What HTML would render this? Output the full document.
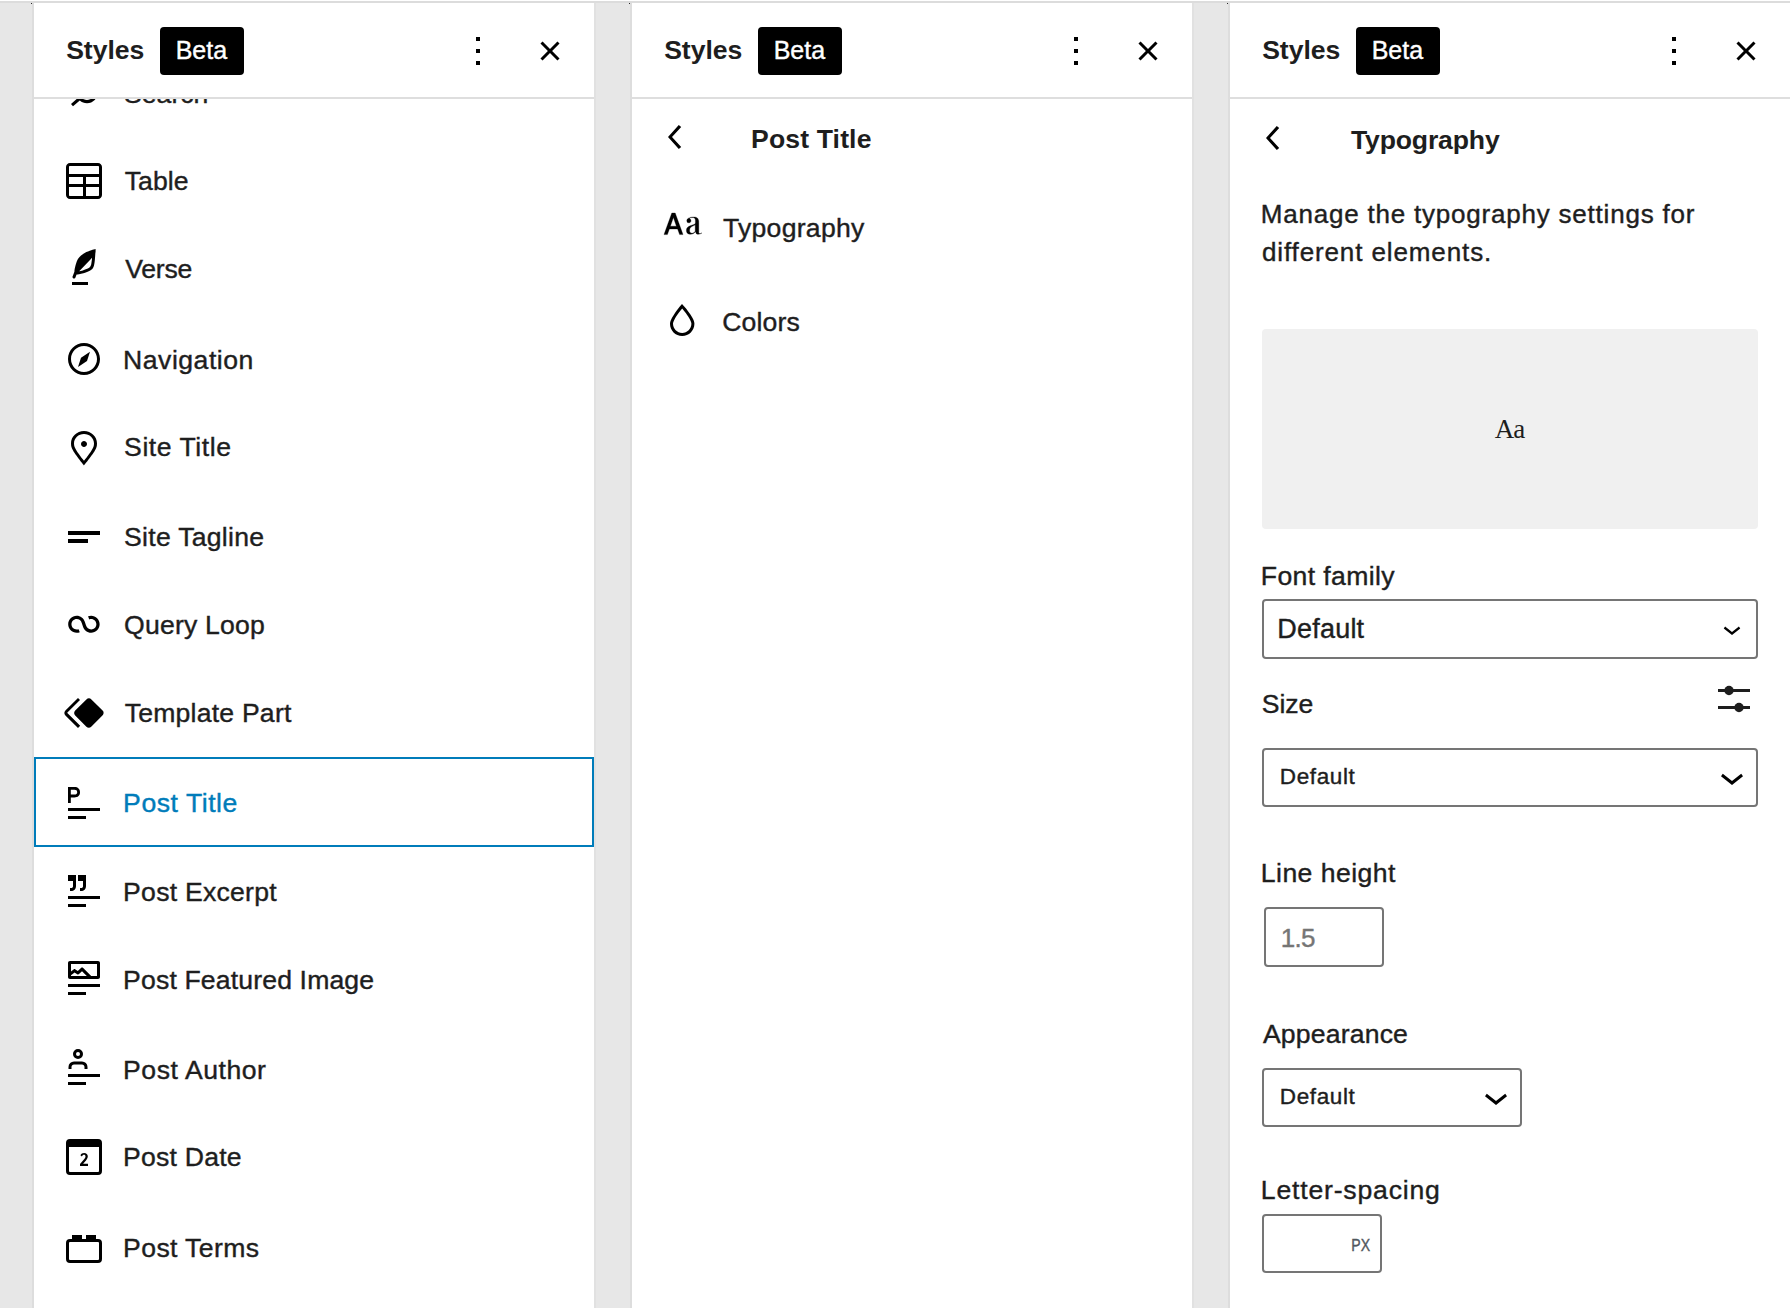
<!DOCTYPE html>
<html><head><meta charset="utf-8"><title>Styles</title>
<style>
html,body{margin:0;padding:0}
body{width:1790px;height:1308px;position:relative;overflow:hidden;background:#e7e7e7;font-family:'Liberation Sans',sans-serif}
.t{position:absolute;white-space:nowrap;-webkit-text-stroke:0.4px currentColor}
.i{position:absolute;display:block}
.b{position:absolute}
.top0{position:absolute;left:0;top:0;width:1790px;height:1px;background:#fff}
</style></head><body>
<div class="top0"></div>
<div class="b" style="left:0px;top:1px;width:1790px;height:2px;background:#dcdcdc"></div>
<div class="b" style="left:32px;top:3px;width:2px;height:1305px;background:#dddddd"></div>
<div class="b" style="left:34px;top:3px;width:560px;height:1305px;background:#fff"></div>
<div class="b" style="left:34px;top:97px;width:560px;height:2px;background:#dedede"></div>
<div class="b" style="left:594px;top:3px;width:2px;height:1305px;background:#e1e1e1"></div>
<div class="b" style="left:31px;top:3px;width:1px;height:1px;background:#2a2a2a"></div>
<div class="b" style="left:630px;top:3px;width:2px;height:1305px;background:#dddddd"></div>
<div class="b" style="left:632px;top:3px;width:560px;height:1305px;background:#fff"></div>
<div class="b" style="left:632px;top:97px;width:560px;height:2px;background:#dedede"></div>
<div class="b" style="left:1192px;top:3px;width:2px;height:1305px;background:#e1e1e1"></div>
<div class="b" style="left:629px;top:3px;width:1px;height:1px;background:#2a2a2a"></div>
<div class="b" style="left:1228px;top:3px;width:2px;height:1305px;background:#dddddd"></div>
<div class="b" style="left:1230px;top:3px;width:560px;height:1305px;background:#fff"></div>
<div class="b" style="left:1230px;top:97px;width:560px;height:2px;background:#dedede"></div>
<div class="b" style="left:1227px;top:3px;width:1px;height:1px;background:#2a2a2a"></div>
<div class="b" style="left:34px;top:757px;width:560px;height:89.5px;box-sizing:border-box;border:2px solid #007cba"></div>
<svg class="i" style="left:60px;top:69px" width="48" height="48" viewBox="0 0 24 24"><path fill="#000" fill-rule="evenodd" d="M13.5 6C10.5 6 8 8.5 8 11.5c0 1.1.3 2.1.9 3l-3.4 3 1 1.1 3.4-2.9c1 .9 2.2 1.4 3.6 1.4 3 0 5.5-2.5 5.5-5.5C19 8.5 16.5 6 13.5 6zm0 9.5c-2.2 0-4-1.8-4-4s1.8-4 4-4 4 1.8 4 4-1.8 4-4 4z"/></svg>
<div class="t" style="left:124.10px;top:80.69px;font-size:26.6px;line-height:26.6px;letter-spacing:-0.006px;font-family:'Liberation Sans',sans-serif;color:#1e1e1e;">Search</div>
<svg class="i" style="left:60px;top:157px" width="48" height="48" viewBox="0 0 24 24"><path fill="#000" fill-rule="evenodd" d="M19 3H5c-1.1 0-2 .9-2 2v14c0 1.1.9 2 2 2h14c1.1 0 2-.9 2-2V5c0-1.1-.9-2-2-2zM5 4.5h14c.3 0 .5.2.5.5v3.5h-15V5c0-.3.2-.5.5-.5zm8 5.5h6.5v3.5H13V10zm-1.5 3.5h-7V10h7v3.5zm-7 5.5v-4h7v4.5H5c-.3 0-.5-.2-.5-.5zm14.5.5h-6V15h6.5v4c0 .3-.2.5-.5.5z"/></svg>
<div class="t" style="left:124.70px;top:168.29px;font-size:26.6px;line-height:26.6px;letter-spacing:0.089px;font-family:'Liberation Sans',sans-serif;color:#1e1e1e;">Table</div>
<svg class="i" style="left:60px;top:245px" width="48" height="48" viewBox="0 0 24 24"><path fill="#000" fill-rule="evenodd" d="M17.8 2l-.9.3c-.1 0-3.6 1-5.2 2.1C10 5.5 9.3 6.5 8.9 7.1c-.6.9-1.7 4.7-1.7 6.3l-.9 2.3c-.2.4 0 .8.4 1 .1 0 .2.1.3.1.3 0 .6-.2.7-.5l.6-1.5c.3 0 .7-.1 1.2-.2.7-.1 1.4-.3 2.2-.5.8-.2 1.6-.5 2.4-.8.7-.3 1.4-.7 1.9-1.2s.8-1.2 1-1.9c.2-.7.3-1.6.4-2.4.1-.8.1-1.7.2-2.5 0-.8.1-1.5.2-2.1V2zm-1.9 5.6c-.1.8-.2 1.5-.3 2.1-.2.6-.4 1-.6 1.3-.3.3-.8.6-1.4.9-.7.3-1.4.5-2.2.8-.6.2-1.3.3-1.8.4L15 7.5c.3-.3.6-.7 1-1.1 0 .4 0 .8-.1 1.2zM6 20h8v-1.5H6V20z"/></svg>
<div class="t" style="left:125.17px;top:256.09px;font-size:26.6px;line-height:26.6px;letter-spacing:-0.200px;font-family:'Liberation Sans',sans-serif;color:#1e1e1e;">Verse</div>
<svg class="i" style="left:60px;top:335px" width="48" height="48" viewBox="0 0 24 24"><path fill="#000" fill-rule="evenodd" d="M12 4c-4.4 0-8 3.6-8 8s3.6 8 8 8 8-3.6 8-8-3.6-8-8-8zm0 14.5c-3.6 0-6.5-2.9-6.5-6.5S8.4 5.5 12 5.5s6.5 2.9 6.5 6.5-2.9 6.5-6.5 6.5zM9 16l4.5-3L15 8.4l-4.5 3L9 16z"/></svg>
<div class="t" style="left:123.11px;top:346.89px;font-size:26.6px;line-height:26.6px;letter-spacing:0.504px;font-family:'Liberation Sans',sans-serif;color:#1e1e1e;">Navigation</div>
<svg class="i" style="left:60px;top:423px" width="48" height="48" viewBox="0 0 24 24"><path fill="#000" fill-rule="evenodd" d="M12 9c-.8 0-1.5.7-1.5 1.5S11.2 12 12 12s1.5-.7 1.5-1.5S12.8 9 12 9zm0-5c-3.6 0-6.5 2.8-6.5 6.2 0 .8.1 1.6.4 2.3.9 2.4 6.1 8.7 6.1 8.7s5.2-6.3 6.1-8.7c.3-.7.4-1.5.4-2.3C18.5 6.8 15.6 4 12 4zm4.7 8c-.6 1.6-3.3 5.2-4.7 6.9-1.4-1.7-4.1-5.3-4.7-6.9-.2-.6-.3-1.2-.3-1.8C7 7.6 9.2 5.5 12 5.5s5 2.1 5 4.7c0 .6-.1 1.2-.3 1.8z"/></svg>
<div class="t" style="left:124.10px;top:434.39px;font-size:26.6px;line-height:26.6px;letter-spacing:0.546px;font-family:'Liberation Sans',sans-serif;color:#1e1e1e;">Site Title</div>
<svg class="i" style="left:60px;top:513px" width="48" height="48" viewBox="0 0 24 24"><path fill="#000" fill-rule="evenodd" d="M4 9h16v2H4V9zm0 4h10v2H4v-2z"/></svg>
<div class="t" style="left:124.10px;top:523.89px;font-size:26.6px;line-height:26.6px;letter-spacing:0.267px;font-family:'Liberation Sans',sans-serif;color:#1e1e1e;">Site Tagline</div>
<svg class="i" style="left:60px;top:601px" width="48" height="48" viewBox="0 0 24 24"><path fill="#000" fill-rule="evenodd" d="M18.1823 11.6392C18.1823 13.0804 17.0139 14.2487 15.5727 14.2487C14.3579 14.2487 13.335 13.4179 13.0453 12.2922L13.0377 12.2625L13.0278 12.2335L12.3985 10.377L12.3942 10.3785C11.8571 8.64997 10.246 7.39405 8.33961 7.39405C5.99509 7.39405 4.09448 9.29465 4.09448 11.6392C4.09448 13.9837 5.99509 15.8843 8.33961 15.8843C8.88499 15.8843 9.40822 15.781 9.88943 15.5923L9.29212 14.0697C8.99812 14.185 8.67729 14.2487 8.33961 14.2487C6.89838 14.2487 5.73003 13.0804 5.73003 11.6392C5.73003 10.1979 6.89838 9.02959 8.33961 9.02959C9.55444 9.02959 10.5773 9.86046 10.867 10.9862L10.8772 10.9836L11.4695 12.7311C11.9515 14.546 13.6055 15.8843 15.5727 15.8843C17.9172 15.8843 19.8178 13.9837 19.8178 11.6392C19.8178 9.29465 17.9172 7.39404 15.5727 7.39404C15.0287 7.39404 14.5066 7.4968 14.0264 7.6847L14.6223 9.20781C14.9158 9.093 15.2358 9.02959 15.5727 9.02959C17.0139 9.02959 18.1823 10.1979 18.1823 11.6392Z"/></svg>
<div class="t" style="left:124.04px;top:612.49px;font-size:26.6px;line-height:26.6px;letter-spacing:0.205px;font-family:'Liberation Sans',sans-serif;color:#1e1e1e;">Query Loop</div>
<svg class="i" style="left:60px;top:689px" width="48" height="48" viewBox="0 0 24 24"><path fill="#000" fill-rule="evenodd" d="M21.3 10.8l-5.6-5.6c-.7-.7-1.8-.7-2.5 0l-5.6 5.6c-.7.7-.7 1.8 0 2.5l5.6 5.6c.3.3.8.5 1.2.5s.9-.2 1.2-.5l5.6-5.6c.8-.7.8-1.9.1-2.5zm-17.6 1L10 5.5l-1-1-6.3 6.3c-.7.7-.7 1.8 0 2.5L9 19.5l1.1-1.1-6.3-6.3c-.2 0-.2-.2-.1-.3z"/></svg>
<div class="t" style="left:124.70px;top:700.39px;font-size:26.6px;line-height:26.6px;letter-spacing:0.215px;font-family:'Liberation Sans',sans-serif;color:#1e1e1e;">Template Part</div>
<svg class="i" style="left:60px;top:779px" width="48" height="48" viewBox="0 0 24 24"><path fill="#000" fill-rule="evenodd" d="M4 4h3.2c1.8 0 2.8 1 2.8 2.6S9 9.2 7.2 9.2H5.4V12H4V4zM5.4 5.4v2.4h1.8c.9 0 1.4-.4 1.4-1.2S8.1 5.4 7.2 5.4H5.4zM4 14.5h16V16H4V14.5zM4 18.5h9V20H4V18.5z"/></svg>
<div class="t" style="left:123.11px;top:790.39px;font-size:26.6px;line-height:26.6px;letter-spacing:0.537px;font-family:'Liberation Sans',sans-serif;color:#007cba;">Post Title</div>
<svg class="i" style="left:60px;top:867px" width="48" height="48" viewBox="0 0 24 24"><path fill="#000" fill-rule="evenodd" d="M8.001 3.984V9.47c0 1.518-.98 2.5-2.499 2.5h-.5v-1.5h.5c.69 0 1-.31 1-1V6.984H4v-3h4.001zM4 20h9v-1.5H4V20zm16-4H4v-1.5h16V16zM13.001 3.984V9.47c0 1.518-.98 2.5-2.499 2.5h-.5v-1.5h.5c.69 0 1-.31 1-1V6.984H9v-3h4.001z"/></svg>
<div class="t" style="left:123.11px;top:878.89px;font-size:26.6px;line-height:26.6px;letter-spacing:0.249px;font-family:'Liberation Sans',sans-serif;color:#1e1e1e;">Post Excerpt</div>
<svg class="i" style="left:60px;top:955px" width="48" height="48" viewBox="0 0 24 24"><path fill="#000" fill-rule="evenodd" d="M19 3H5c-.6 0-1 .4-1 1v7c0 .5.4 1 1 1h14c.5 0 1-.4 1-1V4c0-.6-.4-1-1-1zM5.5 10.5v-.4l1.8-1.3 1.3.8c.3.2.7.2.9-.1L11 8.1l2.4 2.4H5.5zm13 0h-2.9l-4-4c-.3-.3-.8-.3-1.1 0L8.9 8l-1.2-.8c-.3-.2-.6-.2-.9 0l-1.3 1V4.5h13v6zM4 20h9v-1.5H4V20zm0-4h16v-1.5H4V16z"/></svg>
<div class="t" style="left:123.11px;top:966.89px;font-size:26.6px;line-height:26.6px;letter-spacing:0.147px;font-family:'Liberation Sans',sans-serif;color:#1e1e1e;">Post Featured Image</div>
<svg class="i" style="left:60px;top:1045px" width="48" height="48" viewBox="0 0 24 24"><path fill="#000" fill-rule="evenodd" d="M10 4.5a1 1 0 11-2 0 1 1 0 012 0zm1.5 0a2.5 2.5 0 11-5 0 2.5 2.5 0 015 0zm2.25 7.5v-1A2.75 2.75 0 0011 8.25H7A2.75 2.75 0 004.25 11v1h1.5v-1c0-.69.56-1.25 1.25-1.25h4c.69 0 1.25.56 1.25 1.25v1h1.5zM4 20h9v-1.5H4V20zm16-4H4v-1.5h16V16z"/></svg>
<div class="t" style="left:123.11px;top:1056.89px;font-size:26.6px;line-height:26.6px;letter-spacing:0.527px;font-family:'Liberation Sans',sans-serif;color:#1e1e1e;">Post Author</div>
<svg class="i" style="left:60px;top:1133px" width="48" height="48" viewBox="0 0 24 24"><path fill="#000" fill-rule="evenodd" d="M19.5 7h-15v12a.5.5 0 00.5.5h14a.5.5 0 00.5-.5V7zM3 7V5a2 2 0 012-2h14a2 2 0 012 2v14a2 2 0 01-2 2H5a2 2 0 01-2-2V7z"/><path fill="#000" d="M10.2 11.1c.4-.8 1-1.15 1.85-1.15 1.1 0 1.85.7 1.85 1.7 0 .7-.3 1.3-.9 2.05l-1.45 1.7H14v1.1h-4v-.95l2.15-2.55c.4-.5.6-.9.6-1.3 0-.5-.3-.8-.75-.8-.45 0-.8.3-1.05.85z"/></svg>
<div class="t" style="left:123.11px;top:1144.49px;font-size:26.6px;line-height:26.6px;letter-spacing:0.219px;font-family:'Liberation Sans',sans-serif;color:#1e1e1e;">Post Date</div>
<svg class="i" style="left:60px;top:1223px" width="48" height="48" viewBox="0 0 24 24"><path fill="#000" fill-rule="evenodd" d="M5 8h14a2 2 0 012 2v8a2 2 0 01-2 2H5a2 2 0 01-2-2v-8a2 2 0 012-2zM5 9.5a.5.5 0 00-.5.5v8a.5.5 0 00.5.5h14a.5.5 0 00.5-.5v-8a.5.5 0 00-.5-.5H5zM6 6h5v2H6V6zm7 0h5v2h-5V6z"/></svg>
<div class="t" style="left:123.11px;top:1234.69px;font-size:26.6px;line-height:26.6px;letter-spacing:0.377px;font-family:'Liberation Sans',sans-serif;color:#1e1e1e;">Post Terms</div>
<div class="b" style="left:34px;top:3px;width:560px;height:94px;background:#fff"></div>
<div class="b" style="left:34px;top:97px;width:560px;height:2px;background:#dedede"></div>
<div class="t" style="left:66.20px;top:36.59px;font-size:26.6px;line-height:26.6px;letter-spacing:-0.055px;font-family:'Liberation Sans',sans-serif;font-weight:700;-webkit-text-stroke:0;color:#1e1e1e;">Styles</div>
<div class="b" style="left:160px;top:27px;width:84px;height:48px;background:#000;border-radius:4px"></div>
<div class="t" style="left:175.64px;top:37.85px;font-size:25px;line-height:25px;letter-spacing:-0.004px;font-family:'Liberation Sans',sans-serif;color:#fff;">Beta</div>
<svg class="i" style="left:454px;top:27px" width="48" height="48" viewBox="0 0 24 24"><path fill="#000" fill-rule="evenodd" d="M13 19h-2v-2h2v2zm0-6h-2v-2h2v2zm0-6h-2V5h2v2z"/></svg>
<svg class="i" style="left:526px;top:27px" width="48" height="48" viewBox="0 0 24 24"><path fill="#000" fill-rule="evenodd" d="M12 13.06l3.712 3.713 1.061-1.06L13.061 12l3.712-3.712-1.06-1.06L12 10.938 8.288 7.227l-1.061 1.06L10.939 12l-3.712 3.712 1.06 1.061L12 13.061z"/></svg>
<div class="t" style="left:664.20px;top:36.59px;font-size:26.6px;line-height:26.6px;letter-spacing:-0.055px;font-family:'Liberation Sans',sans-serif;font-weight:700;-webkit-text-stroke:0;color:#1e1e1e;">Styles</div>
<div class="b" style="left:758px;top:27px;width:84px;height:48px;background:#000;border-radius:4px"></div>
<div class="t" style="left:773.64px;top:37.85px;font-size:25px;line-height:25px;letter-spacing:-0.004px;font-family:'Liberation Sans',sans-serif;color:#fff;">Beta</div>
<svg class="i" style="left:1052px;top:27px" width="48" height="48" viewBox="0 0 24 24"><path fill="#000" fill-rule="evenodd" d="M13 19h-2v-2h2v2zm0-6h-2v-2h2v2zm0-6h-2V5h2v2z"/></svg>
<svg class="i" style="left:1124px;top:27px" width="48" height="48" viewBox="0 0 24 24"><path fill="#000" fill-rule="evenodd" d="M12 13.06l3.712 3.713 1.061-1.06L13.061 12l3.712-3.712-1.06-1.06L12 10.938 8.288 7.227l-1.061 1.06L10.939 12l-3.712 3.712 1.06 1.061L12 13.061z"/></svg>
<svg class="i" style="left:652px;top:113px" width="48" height="48" viewBox="0 0 24 24"><path fill="#000" fill-rule="evenodd" d="M14.6 7l-1.2-1L8 12l5.4 6 1.2-1-4.6-5z"/></svg>
<div class="t" style="left:751.10px;top:126.39px;font-size:26.6px;line-height:26.6px;letter-spacing:0.125px;font-family:'Liberation Sans',sans-serif;font-weight:700;-webkit-text-stroke:0;color:#1e1e1e;">Post Title</div>
<svg class="i" style="left:658px;top:199px" width="48" height="48" viewBox="0 0 24 24"><path fill="#000" fill-rule="evenodd" d="M6.9 7L3 17.8h1.7l1-2.8h4.1l1 2.8h1.7L8.6 7H6.9zm-.7 6.6l1.5-4.3 1.5 4.3h-3zM21.6 17c-.1.1-.2.2-.3.2-.1.1-.2.1-.4.1s-.3-.1-.4-.2c-.1-.1-.1-.3-.1-.6V12c0-.5 0-1-.1-1.4-.1-.4-.3-.7-.5-1-.2-.2-.5-.4-.9-.5-.4 0-.8-.1-1.3-.1s-1 .1-1.4.2c-.4.1-.7.3-1 .4-.2.2-.4.3-.6.5-.1.2-.2.4-.2.7 0 .3.1.5.2.8.2.2.4.3.8.3.3 0 .6-.1.8-.3.2-.2.3-.4.3-.7 0-.3-.1-.5-.2-.7-.2-.2-.4-.3-.6-.4.2-.2.4-.3.7-.4.3-.1.6-.1.8-.1.3 0 .6 0 .8.1.2.1.4.3.5.5.1.2.2.5.2.9v1.1c0 .3-.1.5-.3.6-.2.2-.5.3-.9.4-.3.1-.7.3-1.1.4-.4.1-.8.3-1.1.5-.3.2-.6.4-.8.7-.2.3-.3.7-.3 1.2 0 .6.2 1.1.5 1.4.3.4.9.5 1.6.5.5 0 1-.1 1.4-.3.4-.2.8-.6 1.1-1.1 0 .4.1.7.3 1 .2.3.6.4 1.2.4.4 0 .7-.1.9-.2.2-.1.5-.3.7-.4h-.3zm-3-.9c-.2.4-.5.7-.8.8-.3.2-.6.2-.8.2-.4 0-.6-.1-.9-.3-.2-.2-.3-.6-.3-1.1 0-.5.1-.9.3-1.2s.5-.5.8-.7c.3-.2.7-.3 1-.5.3-.1.6-.3.7-.6v3.4z"/><path fill="none" stroke="#000" stroke-width=".15" d="M6.9 7L3 17.8h1.7l1-2.8h4.1l1 2.8h1.7L8.6 7H6.9zm-.7 6.6l1.5-4.3 1.5 4.3h-3zM21.6 17c-.1.1-.2.2-.3.2-.1.1-.2.1-.4.1s-.3-.1-.4-.2c-.1-.1-.1-.3-.1-.6V12c0-.5 0-1-.1-1.4-.1-.4-.3-.7-.5-1-.2-.2-.5-.4-.9-.5-.4 0-.8-.1-1.3-.1s-1 .1-1.4.2c-.4.1-.7.3-1 .4-.2.2-.4.3-.6.5-.1.2-.2.4-.2.7 0 .3.1.5.2.8.2.2.4.3.8.3.3 0 .6-.1.8-.3.2-.2.3-.4.3-.7 0-.3-.1-.5-.2-.7-.2-.2-.4-.3-.6-.4.2-.2.4-.3.7-.4.3-.1.6-.1.8-.1.3 0 .6 0 .8.1.2.1.4.3.5.5.1.2.2.5.2.9v1.1c0 .3-.1.5-.3.6-.2.2-.5.3-.9.4-.3.1-.7.3-1.1.4-.4.1-.8.3-1.1.5-.3.2-.6.4-.8.7-.2.3-.3.7-.3 1.2 0 .6.2 1.1.5 1.4.3.4.9.5 1.6.5.5 0 1-.1 1.4-.3.4-.2.8-.6 1.1-1.1 0 .4.1.7.3 1 .2.3.6.4 1.2.4.4 0 .7-.1.9-.2.2-.1.5-.3.7-.4h-.3zm-3-.9c-.2.4-.5.7-.8.8-.3.2-.6.2-.8.2-.4 0-.6-.1-.9-.3-.2-.2-.3-.6-.3-1.1 0-.5.1-.9.3-1.2s.5-.5.8-.7c.3-.2.7-.3 1-.5.3-.1.6-.3.7-.6v3.4z"/></svg>
<div class="t" style="left:722.90px;top:214.89px;font-size:26.6px;line-height:26.6px;letter-spacing:0.276px;font-family:'Liberation Sans',sans-serif;color:#1e1e1e;">Typography</div>
<svg class="i" style="left:658px;top:296px" width="48" height="48" viewBox="0 0 24 24"><path fill="#000" fill-rule="evenodd" d="M17.2 10.9c-.5-1-1.2-2.1-2.1-3.2-.6-.9-1.3-1.7-2.1-2.6L12 4l-1 1.1c-.6.9-1.3 1.7-2 2.6-.8 1.2-1.5 2.3-2 3.2-.6 1.2-1 2.2-1 3 0 3.4 2.7 6.1 6.1 6.1s6.1-2.7 6.1-6.1c0-.8-.3-1.8-1-3zm-5.1 7.6c-2.5 0-4.6-2.1-4.6-4.6 0-.3.1-1 .8-2.3.5-.9 1.1-1.9 2-3.1.7-.9 1.3-1.7 1.8-2.3.7.8 1.3 1.6 1.8 2.3.8 1.1 1.5 2.2 2 3.1.7 1.3.8 2 .8 2.3 0 2.5-2.1 4.6-4.6 4.6z"/></svg>
<div class="t" style="left:722.17px;top:308.69px;font-size:26.6px;line-height:26.6px;letter-spacing:0.177px;font-family:'Liberation Sans',sans-serif;color:#1e1e1e;">Colors</div>
<div class="t" style="left:1262.20px;top:36.59px;font-size:26.6px;line-height:26.6px;letter-spacing:-0.055px;font-family:'Liberation Sans',sans-serif;font-weight:700;-webkit-text-stroke:0;color:#1e1e1e;">Styles</div>
<div class="b" style="left:1356px;top:27px;width:84px;height:48px;background:#000;border-radius:4px"></div>
<div class="t" style="left:1371.64px;top:37.85px;font-size:25px;line-height:25px;letter-spacing:-0.004px;font-family:'Liberation Sans',sans-serif;color:#fff;">Beta</div>
<svg class="i" style="left:1650px;top:27px" width="48" height="48" viewBox="0 0 24 24"><path fill="#000" fill-rule="evenodd" d="M13 19h-2v-2h2v2zm0-6h-2v-2h2v2zm0-6h-2V5h2v2z"/></svg>
<svg class="i" style="left:1722px;top:27px" width="48" height="48" viewBox="0 0 24 24"><path fill="#000" fill-rule="evenodd" d="M12 13.06l3.712 3.713 1.061-1.06L13.061 12l3.712-3.712-1.06-1.06L12 10.938 8.288 7.227l-1.061 1.06L10.939 12l-3.712 3.712 1.06 1.061L12 13.061z"/></svg>
<svg class="i" style="left:1250px;top:114px" width="48" height="48" viewBox="0 0 24 24"><path fill="#000" fill-rule="evenodd" d="M14.6 7l-1.2-1L8 12l5.4 6 1.2-1-4.6-5z"/></svg>
<div class="t" style="left:1350.93px;top:127.49px;font-size:26.6px;line-height:26.6px;letter-spacing:-0.158px;font-family:'Liberation Sans',sans-serif;font-weight:700;-webkit-text-stroke:0;color:#1e1e1e;">Typography</div>
<div class="t" style="left:1260.86px;top:200.80px;font-size:26px;line-height:26px;letter-spacing:0.785px;font-family:'Liberation Sans',sans-serif;color:#1e1e1e;">Manage the typography settings for</div>
<div class="t" style="left:1261.89px;top:238.60px;font-size:26px;line-height:26px;letter-spacing:0.886px;font-family:'Liberation Sans',sans-serif;color:#1e1e1e;">different elements.</div>
<div class="b" style="left:1262px;top:329px;width:496px;height:200px;background:#f0f0f0;border-radius:4px"></div>
<div class="t" style="left:1494.73px;top:416.19px;font-size:27px;line-height:27px;letter-spacing:-0.848px;font-family:'Liberation Serif',serif;-webkit-text-stroke:0;color:#1e1e1e;">Aa</div>
<div class="t" style="left:1260.81px;top:562.79px;font-size:26.6px;line-height:26.6px;letter-spacing:0.379px;font-family:'Liberation Sans',sans-serif;color:#1e1e1e;">Font family</div>
<div class="b" style="left:1262px;top:599px;width:496px;height:60px;box-sizing:border-box;border:2px solid #757575;border-radius:4px;background:#fff"></div>
<div class="t" style="left:1277.37px;top:616.15px;font-size:27px;line-height:27px;letter-spacing:0.201px;font-family:'Liberation Sans',sans-serif;color:#1e1e1e;">Default</div>
<svg class="i" style="left:1714.25px;top:611.4px" width="36" height="36" viewBox="0 0 24 24"><path fill="#000" fill-rule="evenodd" d="M17.5 11.6L12 16l-5.5-4.4.9-1.2L12 14l4.6-3.6z"/></svg>
<div class="t" style="left:1261.80px;top:690.89px;font-size:26.6px;line-height:26.6px;letter-spacing:-0.070px;font-family:'Liberation Sans',sans-serif;color:#1e1e1e;">Size</div>
<svg class="i" style="left:1700px;top:670px" width="60" height="60" viewBox="0 0 60 60"><rect x="18" y="19" width="32" height="3" fill="#1e1e1e"/><rect x="18" y="36" width="32" height="3" fill="#1e1e1e"/><circle cx="29" cy="20.5" r="4.7" fill="#1e1e1e"/><circle cx="39" cy="37.5" r="4.7" fill="#1e1e1e"/></svg>
<div class="b" style="left:1262px;top:747.5px;width:496px;height:59.0px;box-sizing:border-box;border:2px solid #757575;border-radius:4px;background:#fff"></div>
<div class="t" style="left:1279.84px;top:765.77px;font-size:22.5px;line-height:22.5px;letter-spacing:0.609px;font-family:'Liberation Sans',sans-serif;color:#1e1e1e;">Default</div>
<svg class="i" style="left:1708px;top:753.2px" width="48" height="48" viewBox="0 0 24 24"><path fill="#000" fill-rule="evenodd" d="M17.5 11.6L12 16l-5.5-4.4.9-1.2L12 14l4.6-3.6z"/></svg>
<div class="t" style="left:1260.81px;top:860.49px;font-size:26.6px;line-height:26.6px;letter-spacing:0.445px;font-family:'Liberation Sans',sans-serif;color:#1e1e1e;">Line height</div>
<div class="b" style="left:1264px;top:907px;width:120px;height:60px;box-sizing:border-box;border:2px solid #757575;border-radius:4px;background:#fff"></div>
<div class="t" style="left:1280.85px;top:925.10px;font-size:26px;line-height:26px;letter-spacing:-0.775px;font-family:'Liberation Sans',sans-serif;color:#757575;">1.5</div>
<div class="t" style="left:1262.93px;top:1020.89px;font-size:26.6px;line-height:26.6px;letter-spacing:0.173px;font-family:'Liberation Sans',sans-serif;color:#1e1e1e;">Appearance</div>
<div class="b" style="left:1262px;top:1067.5px;width:259.5px;height:59.0px;box-sizing:border-box;border:2px solid #757575;border-radius:4px;background:#fff"></div>
<div class="t" style="left:1279.84px;top:1086.47px;font-size:22.5px;line-height:22.5px;letter-spacing:0.609px;font-family:'Liberation Sans',sans-serif;color:#1e1e1e;">Default</div>
<svg class="i" style="left:1472px;top:1073.2px" width="48" height="48" viewBox="0 0 24 24"><path fill="#000" fill-rule="evenodd" d="M17.5 11.6L12 16l-5.5-4.4.9-1.2L12 14l4.6-3.6z"/></svg>
<div class="t" style="left:1260.81px;top:1176.69px;font-size:26.6px;line-height:26.6px;letter-spacing:0.811px;font-family:'Liberation Sans',sans-serif;color:#1e1e1e;">Letter-spacing</div>
<div class="b" style="left:1262px;top:1213.5px;width:119.5px;height:59.0px;box-sizing:border-box;border:2px solid #757575;border-radius:4px;background:#fff"></div>
<div class="t" style="left:1350.57px;top:1236.60px;font-size:17.3px;line-height:17.3px;letter-spacing:0.000px;font-family:'Liberation Sans',sans-serif;color:#50575e;transform:scaleX(0.815);transform-origin:1.43px 0;">PX</div>
</body></html>
